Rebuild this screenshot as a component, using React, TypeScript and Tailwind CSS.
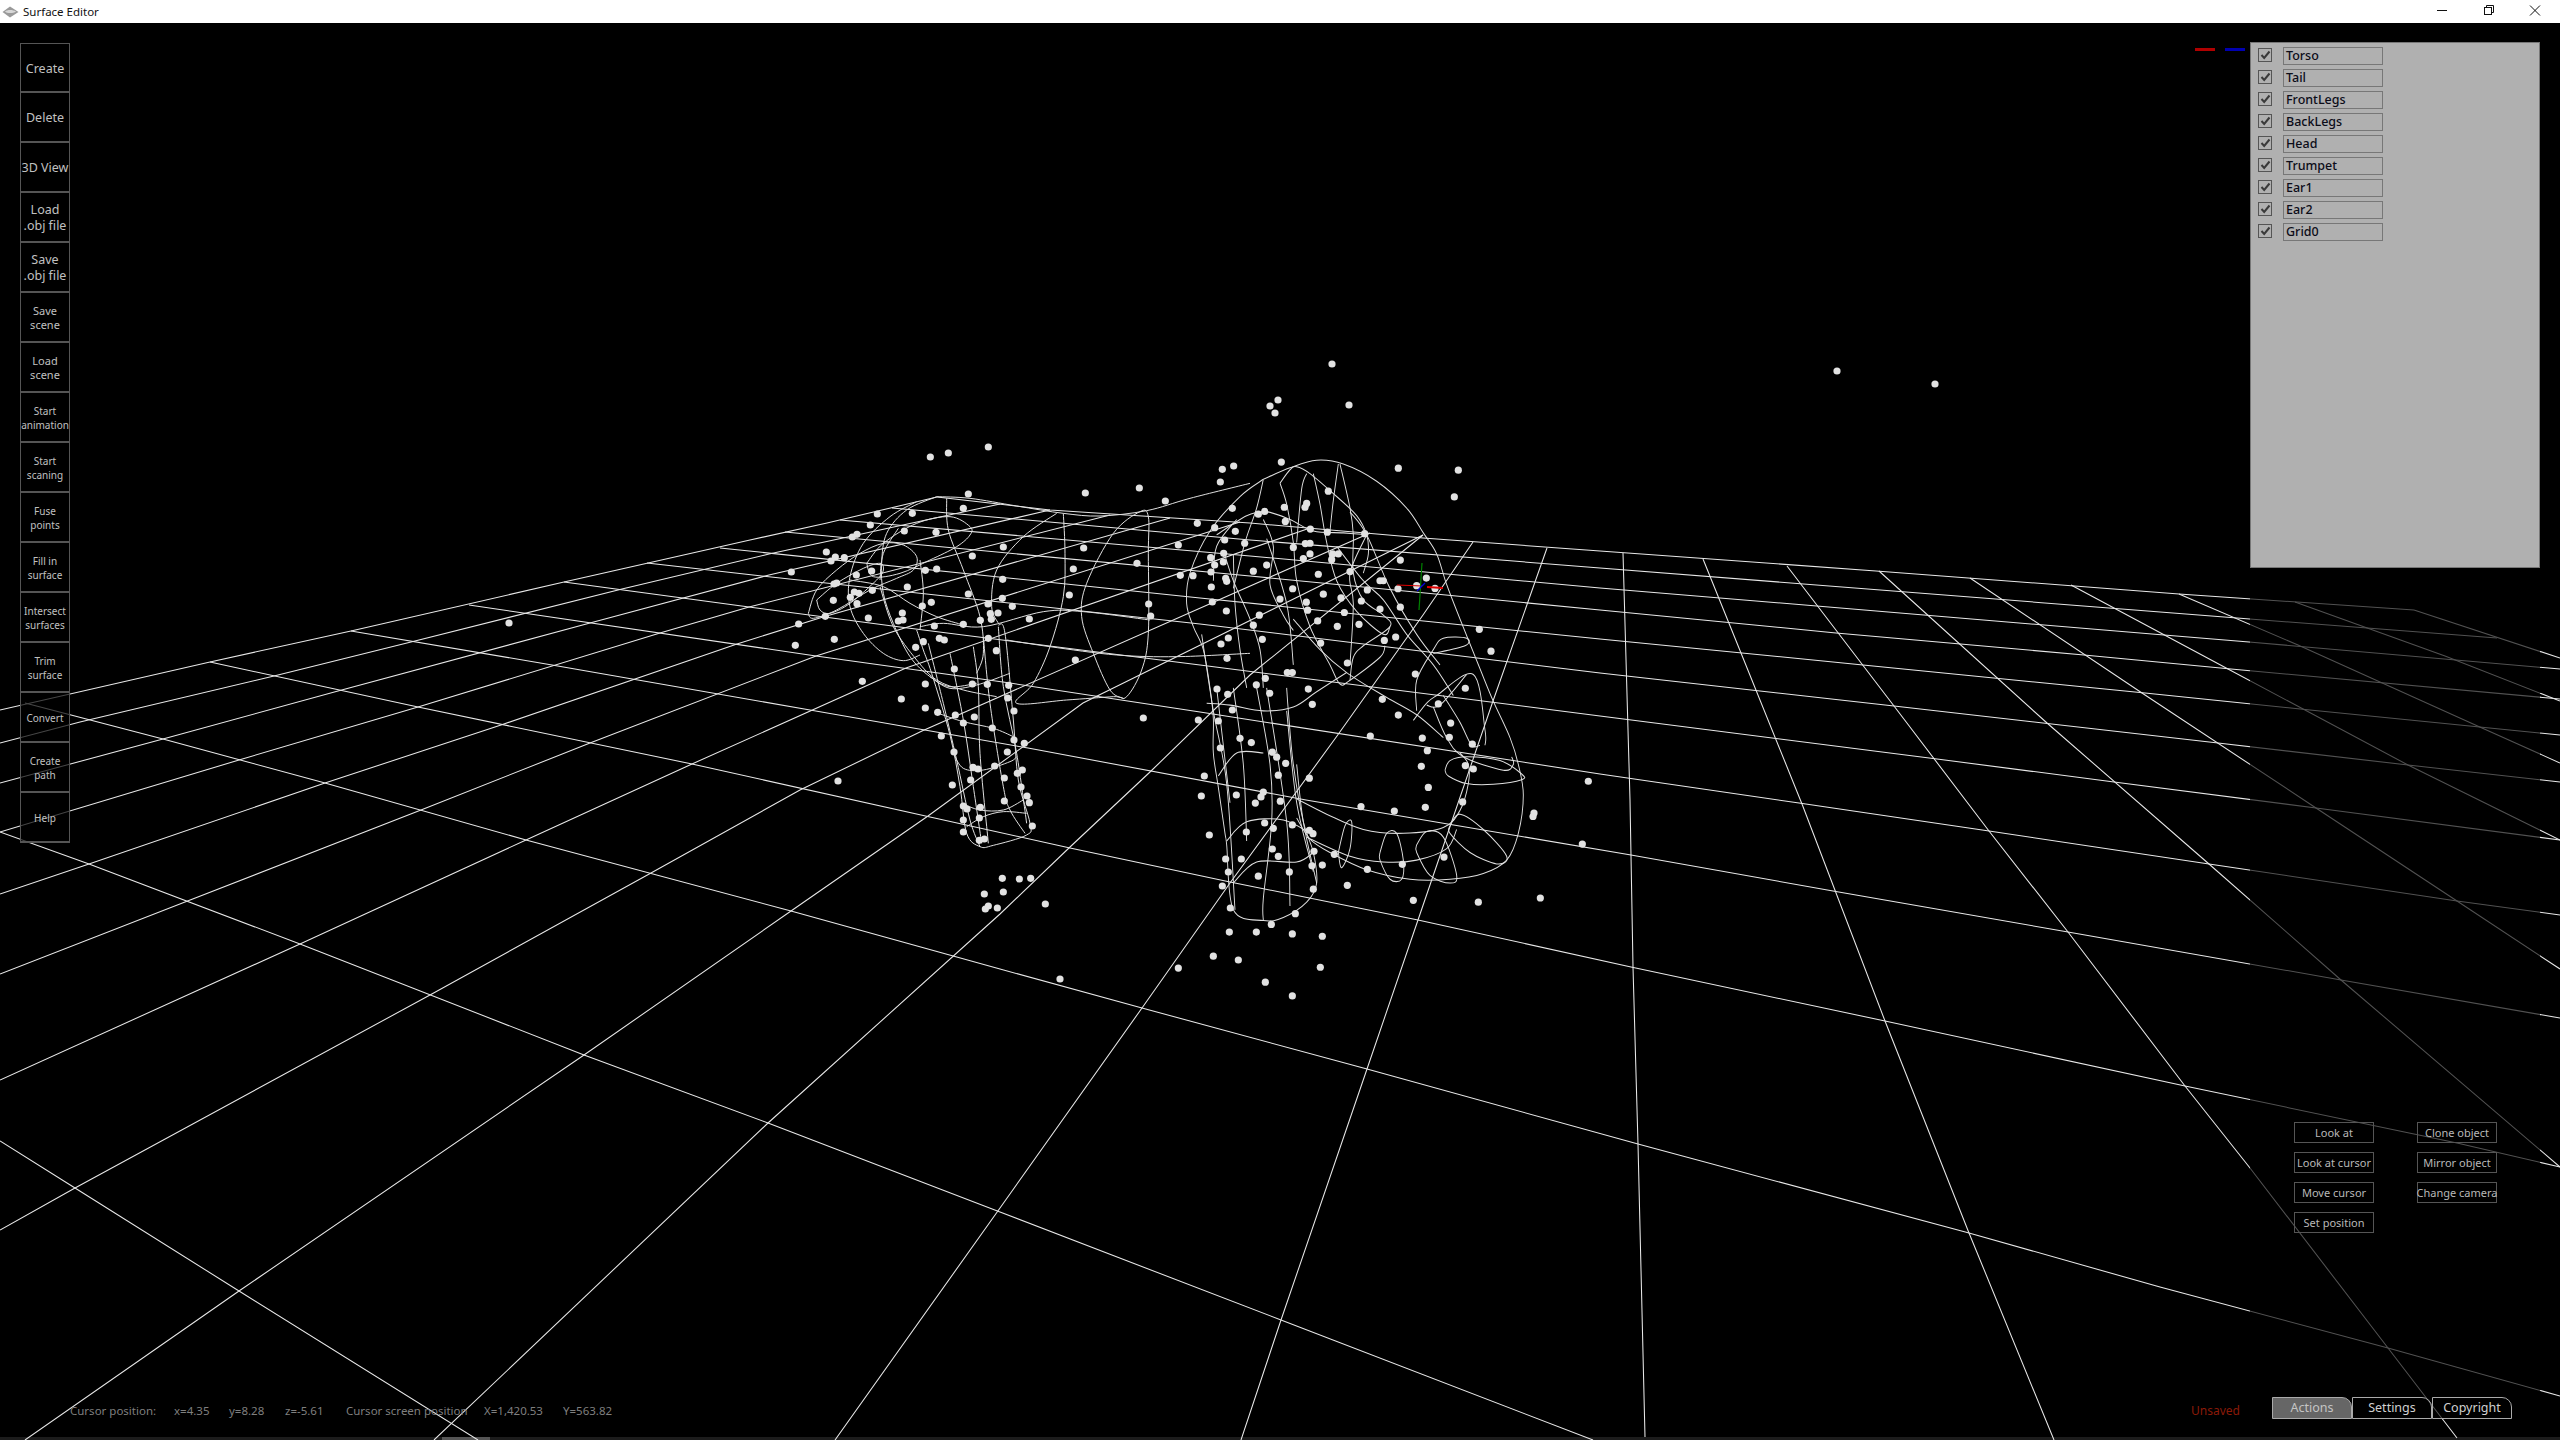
import React from "react";

type Pts = number[][];

const gridLines: Pts[] = [
  [[937,497],[1050,510],[1250,523],[1423,538],[1600,551],[1876,571],[2179,594],[2414,610]],
  [[892,508],[1250,540],[1600,568],[2237,618],[2497,638]],
  [[840,520],[1250,556],[1600,588],[2164,635],[2249,642],[2560,669]],
  [[785,532],[1250,576],[1600,610],[1836,633],[2084,655],[2231,669],[2560,699]],
  [[720,548],[1200,598],[1600,639],[1863,665],[2145,693],[2310,710],[2560,735]],
  [[647,563],[753,575],[1200,624],[1600,673],[1894,706],[2218,743],[2408,765],[2560,782]],
  [[564,582],[749,607],[900,627],[1200,665],[1600,716],[1937,759],[2114,782],[2316,808],[2560,840]],
  [[469,605],[816,656],[1010,683],[1200,712],[1600,774],[1799,803],[1989,831],[2209,864],[2457,901],[2560,915]],
  [[351,631],[552,665],[810,710],[1028,748],[1306,800],[1631,855],[1833,891],[2068,932],[2341,980],[2560,1018]],
  [[210,662],[418,707],[692,764],[930,817],[1070,848],[1230,882],[1418,920],[1631,967],[1885,1021],[2185,1086],[2457,1143],[2560,1167]],
  [[25,703],[163,739],[325,783],[526,840],[791,911],[1000,969],[1142,1008],[1367,1069],[1638,1144],[1969,1233],[2160,1287],[2388,1348],[2560,1396]],
  [[0,832],[89,864],[300,944],[584,1055],[768,1123],[1000,1212],[1281,1320],[1593,1440]],
  [[0,1141],[75,1188],[239,1291],[478,1440]],
  [[0,710],[210,662],[351,631],[564,582],[750,540],[827,523],[937,497]],
  [[0,743],[80,722],[274,676],[415,641],[622,589],[769,554],[1000,504]],
  [[0,783],[163,739],[338,691],[590,623],[769,575],[1050,510]],
  [[0,832],[239,760],[418,707],[660,633],[749,607],[1110,515]],
  [[0,894],[89,864],[325,783],[501,725],[737,644],[823,617],[1170,518]],
  [[0,974],[185,902],[421,810],[590,743],[816,656],[1240,522]],
  [[0,1080],[300,944],[526,840],[692,764],[906,668],[1310,528]],
  [[0,1230],[75,1188],[430,995],[651,873],[800,790],[922,731],[1370,533]],
  [[25,1440],[239,1291],[584,1055],[791,911],[928,816],[1083,703],[1423,535]],
  [[434,1440],[768,1123],[1000,914],[1070,847],[1150,772],[1250,675],[1423,535]],
  [[835,1440],[1000,1208],[1142,1008],[1230,883],[1337,736],[1423,615],[1473,542]],
  [[1241,1440],[1281,1320],[1367,1069],[1418,920],[1493,701],[1547,548]],
  [[1645,1437],[1638,1144],[1633,967],[1630,800],[1623,553]],
  [[1703,559],[1741,653],[1802,804],[1885,1021],[1969,1233],[2054,1440]],
  [[1787,566],[1894,706],[1989,831],[2068,932],[2185,1086],[2250,1168],[2388,1348],[2457,1438]],
  [[1879,571],[2047,723],[2209,864],[2341,980],[2560,1167]],
  [[1970,578],[2142,693],[2316,808],[2457,901],[2560,969]],
  [[2071,585],[2228,669],[2408,765],[2560,840]],
  [[2179,594],[2298,645],[2482,728],[2560,763]],
  [[2295,602],[2445,656],[2560,701]],
  [[2414,610],[2560,658]],
];

const hindCurves: Pts[] = [
  [[500,245],[420,290],[340,370],[300,470],[300,560],[340,640],[400,700],[460,722],[510,705]],
  [[560,230],[470,270],[410,340],[395,430],[400,520],[430,610],[480,710],[540,770],[600,800],[680,790]],
  [[175,580],[200,510],[260,450],[330,400],[400,370],[460,375],[500,410],[490,450],[440,475],[360,510],[260,570],[190,595],[175,580]],
  [[200,540],[210,570],[240,580],[300,550],[380,480],[400,450],[390,430],[340,445],[260,490],[200,540]],
  [[350,430],[400,370],[500,310],[600,290],[660,320],[660,345],[620,380],[540,420],[450,460],[370,470],[350,430]],
  [[560,230],[660,235],[800,258],[940,280],[1050,288],[1190,272],[1320,235],[1500,190]],
  [[500,630],[520,690],[545,760],[600,945],[630,1100],[650,1240],[690,1280],[730,1276],[830,1245],[840,1210],[805,1080],[790,900],[765,640],[745,615]],
  [[535,670],[580,850],[620,1020],[660,1200],[690,1280]],
  [[600,700],[640,900],[670,1100],[695,1270]],
  [[670,680],[685,800],[690,1000],[715,1270]],
  [[700,650],[720,850],[760,1100],[780,1170],[825,1240]],
  [[745,620],[760,800],[800,1000],[830,1210]],
  [[540,770],[600,805],[680,795],[780,760]],
  [[565,880],[640,905],[730,925],[790,950]],
  [[610,1000],[640,1045],[700,1050],[780,1025],[800,1010]],
  [[635,1150],[690,1170],[760,1170],[820,1140]],
  [[650,1220],[700,1190],[760,1175],[830,1180]],
  [[590,235],[595,330],[640,450],[690,590],[700,700],[680,760]],
  [[940,280],[945,400],[940,530],[900,680],[850,790],[800,850],[950,840],[1090,830],[1130,830],[1175,750],[1195,640],[1195,400],[1195,290],[1170,275],[1090,340],[1010,490],[995,590],[1030,700],[1080,810],[1120,835]],
  [[920,280],[820,350],[740,450],[725,560],[745,610]],
  [[510,620],[580,610],[700,620],[880,575],[1000,575],[1200,600]],
  [[770,660],[900,680],[1100,705],[1280,710],[1500,700]],
  [[300,480],[400,500],[480,550],[560,590],[640,615]],
  [[390,500],[430,620],[500,720],[560,780],[640,810],[740,830]],
  [[510,420],[520,520],[510,630]],
  [[445,325],[400,400],[390,480]],
];

const frontCurves: Pts[] = [
  [[340,155],[420,125],[500,105],[580,115],[680,160],[770,230],[820,295],[860,350],[890,430],[930,520],[990,650],[1030,735],[1080,830],[1105,900],[1120,980],[1105,1080],[1070,1150],[1000,1185],[900,1200],[780,1200],[650,1175],[540,1130],[480,1095],[440,1040]],
  [[340,155],[320,230],[285,320],[250,440]],
  [[340,155],[270,200],[180,290],[120,400],[110,480],[130,540],[160,600],[180,700],[190,780],[190,870],[205,960],[225,1080],[230,1110],[250,1280],[340,1308],[400,1300],[470,1260],[500,1210],[490,1130],[460,1050],[430,900],[415,760],[410,700]],
  [[390,165],[420,130],[440,122],[480,140],[560,200],[620,250],[650,300],[655,350],[640,400]],
  [[390,165],[410,220],[430,320],[440,420],[480,540],[540,640],[570,690],[600,680],[690,620],[705,590]],
  [[490,140],[510,220],[530,320],[560,420],[620,500],[700,560],[720,540]],
  [[565,115],[550,210],[540,290]],
  [[570,115],[600,230],[610,300],[610,400],[640,470],[700,510],[720,540],[640,590],[610,620],[600,680]],
  [[440,320],[455,180],[470,140]],
  [[200,300],[290,250],[350,240],[420,260],[490,290],[580,295],[655,300]],
  [[190,420],[200,330],[260,260]],
  [[250,350],[255,480],[270,600],[290,700]],
  [[340,260],[370,330],[360,430],[400,510],[430,550]],
  [[800,760],[800,680],[850,600],[880,570],[950,570],[945,590],[850,610]],
  [[790,785],[830,740],[860,720],[970,665],[1005,810],[1005,850]],
  [[830,745],[870,745],[950,665]],
  [[880,720],[930,790],[965,850],[990,850]],
  [[850,750],[890,830],[940,880],[1060,915],[1090,900],[1085,880]],
  [[885,915],[900,890],[950,880],[1050,890],[1115,925],[1115,940],[1030,952],[950,950],[895,930],[885,915]],
  [[565,1130],[585,1060],[605,1050],[600,1120],[575,1170],[565,1130]],
  [[690,1130],[710,1080],[740,1080],[760,1150],[755,1200],[720,1200],[690,1150],[690,1130]],
  [[800,1110],[830,1075],[880,1090],[920,1190],[900,1210],[840,1190],[800,1130],[800,1110]],
  [[900,1060],[930,1030],[1000,1070],[1070,1140],[1040,1160],[960,1130],[900,1080],[900,1060]],
  [[440,990],[530,1030],[640,1070],[760,1080],[880,1065],[930,1020],[955,950],[955,900],[930,870]],
  [[470,1090],[600,1140],[700,1155],[800,1150],[890,1120],[920,1070]],
  [[205,930],[260,870],[340,870]],
  [[230,1100],[290,1050],[400,1045],[480,1080]],
  [[250,1210],[320,1155],[440,1155],[490,1130]],
  [[170,740],[240,745],[340,760],[430,750],[500,710],[590,660]],
  [[155,560],[190,760],[230,950],[255,1280]],
  [[250,700],[280,900],[290,1100]],
  [[320,700],[360,900],[365,1050],[340,1250],[340,1308]],
  [[410,760],[440,1000],[490,1180]],
  [[440,900],[460,1050],[500,1210]],
  [[350,700],[410,1050],[420,1270]],
  [[200,700],[240,1000]],
  [[430,520],[510,600],[590,660],[700,720],[800,770],[880,830]],
  [[560,330],[640,420],[700,470],[770,560],[850,640],[910,720]],
  [[650,300],[600,400],[610,480],[600,640]],
  [[220,340],[250,420],[300,520],[330,600],[340,700]],
  [[350,310],[410,480],[430,640]],
  [[600,240],[650,300],[720,440],[800,560],[870,640]],
];

const hindDots: number[] = [541,111,595,99,715,81,1417,148,1451,138,1411,186,655,222,1006,219,1168,204,1246,243,1447,265,640,265,382,282,487,280,361,315,321,343,307,351,463,333,558,337,1342,310,1394,323,1456,334,1424,360,1285,375,1001,384,760,381,229,396,667,408,256,411,243,423,283,413,1382,413,1421,400,1394,435,1420,426,1161,430,970,447,124,456,526,451,560,447,365,453,319,465,1383,456,1291,466,1329,467,1427,475,1430,484,758,478,260,489,252,492,472,501,1384,501,367,511,313,516,327,520,655,522,958,525,301,532,250,541,757,535,321,551,544,547,1387,546,517,558,714,552,787,559,1196,552,1429,573,457,579,721,581,744,579,226,589,355,594,691,601,724,598,838,597,1202,588,459,600,445,603,146,612,553,618,640,613,253,658,136,676,568,655,583,660,715,655,1435,654,520,665,1413,672,497,682,739,692,976,720,1431,715,613,747,337,784,526,792,667,792,712,793,776,796,1401,807,1433,823,773,834,454,837,526,864,792,873,563,877,616,885,1447,870,673,891,1180,894,640,909,1345,900,1405,903,727,924,574,948,1470,955,792,960,823,970,772,996,612,996,1411,984,734,1038,669,1042,684,1047,817,1050,802,1060,1363,1068,763,1074,662,1080,264,1083,607,1095,813,1101,831,1128,1354,1128,1459,1125,838,1148,640,1158,651,1167,763,1143,691,1162,688,1194,640,1200,847,1218,640,1236,1378,1245,1489,1236,703,1257,688,1261,1427,1317,1474,1317,757,1375,808,1377,842,1375,703,1422,760,1416,1435,1356,1417,1398,715,1458,706,1467,742,1464,886,1452,1441,1464];

const frontDots: number[] = [394,110,745,126,925,131,535,186,913,201,403,228,344,239,325,246,470,218,465,228,406,265,481,285,532,293,644,297,284,322,466,323,480,322,430,333,548,350,565,350,480,350,460,362,545,365,751,366,350,379,310,395,600,396,505,403,690,420,700,420,829,413,800,433,855,440,428,441,652,444,744,441,520,455,390,468,573,465,469,476,634,473,473,497,690,494,751,489,583,503,328,510,503,525,310,536,562,539,627,534,988,547,337,573,737,567,703,576,512,583,1023,604,592,635,412,660,427,660,796,664,346,675,319,692,475,703,946,701,359,714,697,730,865,742,487,743,745,771,902,792,661,826,817,831,898,829,304,843,967,847,367,868,832,864,380,881,407,897,814,905,946,903,970,912,385,928,478,936,1315,944,835,960,340,972,333,985,391,996,316,1001,938,998,633,1010,826,1012,733,1022,1152,1027,1149,1036,344,1053,427,1058,370,1067,478,1072,489,1081,1297,1108,367,1121,385,1140,492,1127,553,1135,882,1142,486,1165,517,1163,757,1161,652,1174,325,1192,418,1181,592,1216,490,1226,1171,1249,790,1255,985,1260,436,1290,364,1318,238,1338,319,1338,427,1343,517,1349,190,1401,265,1411,85,1432,511,1430,346,1469,427,1505];

const extraDots: number[] = [1837,371,1935,384,1332,364,1349,405,1270,406,1278,400,1275,413,509,623,1060,979];

function smooth(p: Pts): string {
  let d = `M${p[0][0]} ${p[0][1]}`;
  for (let i = 0; i < p.length - 1; i++) {
    const a = p[Math.max(0, i - 1)], b = p[i], c = p[i + 1], e = p[Math.min(p.length - 1, i + 2)];
    d += `C${b[0] + (c[0] - a[0]) / 6} ${b[1] + (c[1] - a[1]) / 6} ${c[0] - (e[0] - b[0]) / 6} ${c[1] - (e[1] - b[1]) / 6} ${c[0]} ${c[1]}`;
  }
  return d;
}
const poly = (p: Pts) => p.map((q) => q.join(",")).join(" ");
const pairs = (a: number[]) => {
  const r: Pts = [];
  for (let i = 0; i < a.length; i += 2) r.push([a[i], a[i + 1]]);
  return r;
};

function Scene() {
  return (
    <svg className="absolute left-0 top-[-23px]" width="2560" height="1440" viewBox="0 0 2560 1440" fill="none">
      <g stroke="#e8e8e8" strokeWidth="1.05">
        {gridLines.map((l, i) => (
          <polyline key={i} points={poly(l)} />
        ))}
      </g>
      <g transform="translate(750 420) scale(0.33333 0.33333)" stroke="#e0e0e0" strokeWidth="3">
        {hindCurves.map((c, i) => (
          <path key={i} d={smooth(c)} />
        ))}
      </g>
      <g transform="translate(1150 420) scale(0.33333 0.3827)" stroke="#e0e0e0" strokeWidth="2.8">
        {frontCurves.map((c, i) => (
          <path key={i} d={smooth(c)} />
        ))}
      </g>
      <g fill="#e2e2e2">
        {pairs(hindDots).map(([x, y], i) => (
          <circle key={i} cx={750 + x / 3} cy={420 + y / 3} r="3.6" />
        ))}
        {pairs(frontDots).map(([x, y], i) => (
          <circle key={i} cx={1150 + x / 3} cy={420 + y / 2.613} r="3.6" />
        ))}
        {pairs(extraDots).map(([x, y], i) => (
          <circle key={i} cx={x} cy={y} r="3.6" />
        ))}
      </g>
      <g strokeWidth="1.2">
        <path d="M1397 585L1422 586" stroke="#e00000" />
        <path d="M1427 587L1443 588" stroke="#e00000" strokeWidth="1.8" />
        <path d="M1422 563L1419 610" stroke="#008000" />
        <path d="M1425 583L1417 591" stroke="#0000e0" />
      </g>
    </svg>
  );
}

const tools: { label: string[]; size: string }[] = [
  { label: ["Create"], size: "text-[12.5px] leading-[16px]" },
  { label: ["Delete"], size: "text-[12.5px] leading-[16px]" },
  { label: ["3D View"], size: "text-[12.5px] leading-[16px]" },
  { label: ["Load", ".obj file"], size: "text-[12.5px] leading-[16px]" },
  { label: ["Save", ".obj file"], size: "text-[12.5px] leading-[16px]" },
  { label: ["Save", "scene"], size: "text-[11px] leading-[14px]" },
  { label: ["Load", "scene"], size: "text-[11px] leading-[14px]" },
  { label: ["Start", "animation"], size: "text-[10px] leading-[14px]" },
  { label: ["Start", "scaning"], size: "text-[10px] leading-[14px]" },
  { label: ["Fuse", "points"], size: "text-[10px] leading-[14px]" },
  { label: ["Fill in", "surface"], size: "text-[10px] leading-[14px]" },
  { label: ["Intersect", "surfaces"], size: "text-[10px] leading-[14px]" },
  { label: ["Trim", "surface"], size: "text-[10px] leading-[14px]" },
  { label: ["Convert"], size: "text-[10px] leading-[14px]" },
  { label: ["Create", "path"], size: "text-[10px] leading-[14px]" },
  { label: ["Help"], size: "text-[10px] leading-[14px]" },
];

const objects = ["Torso", "Tail", "FrontLegs", "BackLegs", "Head", "Trumpet", "Ear1", "Ear2", "Grid0"];

const actions = ["Look at", "Clone object", "Look at cursor", "Mirror object", "Move cursor", "Change camera", "Set position"];

function ToolButton({ label, size }: { label: string[]; size: string }) {
  return (
    <div className={`flex h-[50px] flex-col items-center justify-center border-b-2 border-[#555] pt-[2px] text-center text-[#c0c0c0] first:h-[49px] ${size}`}>
      {label.map((l) => (
        <span key={l} className="whitespace-nowrap">{l}</span>
      ))}
    </div>
  );
}

function ObjectRow({ name }: { name: string }) {
  return (
    <div className="flex h-[22px] items-start">
      <div className="mt-[1px] flex h-[14px] w-[14px] items-center justify-center border border-[#555] bg-[#b0b0b0]">
        <svg width="11" height="10" viewBox="0 0 11 10" fill="none">
          <path d="M1.5 5L4.2 8L9.5 1.5" stroke="#3a3a3a" strokeWidth="2" />
        </svg>
      </div>
      <div className="ml-[11px] flex h-[18px] w-[100px] items-center border border-[#777] pl-[2px] pt-[1px] text-[12.5px] font-medium leading-none text-[#0c0c18]">
        {name}
      </div>
    </div>
  );
}

function ActionButton({ label }: { label: string }) {
  return (
    <div className="flex h-[21px] w-[80px] items-center justify-center whitespace-nowrap border border-[#555] text-[11px] leading-none text-[#b8b8b8]">
      {label}
    </div>
  );
}

function Tab({ label, active }: { label: string; active?: boolean }) {
  return (
    <div className={`flex h-[22px] w-[80px] items-center justify-center rounded-tr-[10px] border border-[#aaa] text-[12.5px] leading-none ${active ? "bg-[#666] text-[#c4c4c4]" : "text-[#d0d0d0]"}`}>
      {label}
    </div>
  );
}

function WindowControls() {
  return (
    <div className="flex items-center pr-[2px]">
      <svg width="46" height="23" viewBox="0 0 46 23" fill="none" stroke="#111">
        <path d="M17 10.5H27" />
      </svg>
      <svg width="46" height="23" viewBox="0 0 46 23" fill="none" stroke="#111">
        <rect x="18.5" y="7.5" width="7" height="7" />
        <path d="M20.5 7.5V5.5H27.5V12.5H25.5" />
      </svg>
      <svg width="46" height="23" viewBox="0 0 46 23" fill="none" stroke="#111">
        <path d="M18 5.5L28 15.5M28 5.5L18 15.5" />
      </svg>
    </div>
  );
}

export default function App() {
  return (
    <div className="flex h-screen w-full flex-col overflow-hidden bg-black font-['Noto_Sans','Open_Sans',sans-serif]">
      <div className="flex h-[23px] items-center justify-between bg-white pl-[2px] text-[11.5px] leading-none text-[#111]">
        <div className="flex items-center gap-[4px]">
          <svg width="17" height="12" viewBox="0 0 17 12">
            <path d="M0.5 6L8 0.5L16.5 6L8 11.5Z" fill="#9a9a9a" />
            <path d="M3 5.5C5 3.5 11 3.5 14 5.5C11 7.5 5 7.5 3 5.5Z" fill="#d8d8d8" />
          </svg>
          <span>Surface Editor</span>
        </div>
        <WindowControls />
      </div>

      <div className="relative flex min-h-0 flex-1 justify-between">
        <Scene />

        <div className="relative flex w-[2250px] flex-col justify-between pb-[18px] pl-[20px] pt-[20px]">
          <div className="w-[50px] border-x border-t border-[#555] bg-black/70">
            {tools.map((t) => (
              <ToolButton key={t.label.join(" ")} label={t.label} size={t.size} />
            ))}
          </div>
          <div className="flex items-center justify-between pl-[50px] pr-[10px] text-[11.5px] leading-[16px] text-[#7f7f7f]">
            <div className="flex">
              <span className="w-[104px]">Cursor position:</span>
              <span className="w-[55px]">x=4.35</span>
              <span className="w-[56px]">y=8.28</span>
              <span className="w-[61px]">z=-5.61</span>
              <span className="w-[138px]">Cursor screen position</span>
              <span className="w-[79px]">X=1,420.53</span>
              <span>Y=563.82</span>
            </div>
            <span className="text-[12px] text-[#8a1a08]">Unsaved</span>
          </div>
          <div className="absolute right-[5px] top-[25px] flex gap-[10px]">
            <div className="h-[3px] w-[20px] bg-[#b00000]" />
            <div className="h-[3px] w-[20px] bg-[#0000b0]" />
          </div>
        </div>

        <div className="relative flex w-[310px] flex-col pb-[19px] pr-[20px] pt-[19px]">
          <div className="h-[526px] border border-[#777] bg-[#b0b0b0] pl-[7px] pt-[4px]">
            {objects.map((o) => (
              <ObjectRow key={o} name={o} />
            ))}
          </div>
          <div className="flex flex-1 flex-col bg-black/65 pl-[44px]">
            <div className="mt-[554px] grid w-fit grid-cols-[80px_80px] gap-x-[43px] gap-y-[9px]">
              {actions.map((a) => (
                <ActionButton key={a} label={a} />
              ))}
            </div>
            <div className="-ml-[22px] -mb-[1px] mt-auto flex">
              <Tab label="Actions" active />
              <Tab label="Settings" />
              <Tab label="Copyright" />
            </div>
          </div>
        </div>
      </div>

      <div className="flex h-[3px] bg-[#1c1c1c] pl-[442px]">
        <div className="h-[3px] w-[48px] bg-[#555]" />
      </div>
    </div>
  );
}
